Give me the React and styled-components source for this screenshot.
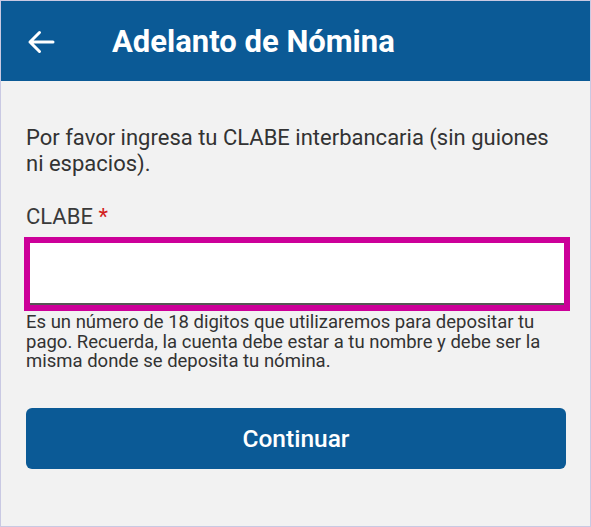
import React, { useState } from 'react';
import styled, { createGlobalStyle } from 'styled-components';

const GlobalStyle = createGlobalStyle`
  html, body {
    margin: 0;
    padding: 0;
    background: #f2f2f2;
  }
  * {
    box-sizing: border-box;
  }
`;

const Frame = styled.div`
  width: 591px;
  height: 527px;
  border: 1px solid #c9c9e3;
  background: #f2f2f2;
  font-family: Roboto, 'Noto Sans', sans-serif;
  overflow: hidden;
`;

const Header = styled.header`
  height: 80px;
  background: #0b5a96;
  display: flex;
  align-items: center;
  padding-left: 26px;
  color: #ffffff;
`;

const BackButton = styled.button`
  width: 28px;
  height: 28px;
  padding: 0;
  border: none;
  background: none;
  display: flex;
  align-items: center;
  justify-content: center;
  cursor: pointer;
  margin-top: 2px;
`;

const Title = styled.h1`
  margin: 0 0 0 57px;
  font-size: 31px;
  font-weight: 700;
  line-height: 1;
`;

const Content = styled.main`
  padding: 44px 25px 0 24px;
`;

const Intro = styled.p`
  margin: 0;
  font-size: 22px;
  line-height: 26px;
  color: #333333;
  padding-left: 1px;
`;

const Label = styled.label`
  display: block;
  margin-top: 27px;
  font-size: 22px;
  line-height: 26px;
  color: #3a3a3a;
  padding-left: 1px;
`;

const Required = styled.span`
  color: #d32020;
`;

const InputWrap = styled.div`
  margin: 7px 0 0 -1px;
  width: 546px;
  border: 6px solid #cc0099;
  background: #ffffff;
`;

const Input = styled.input`
  display: block;
  width: 100%;
  height: 62px;
  border: none;
  border-bottom: 2px solid #555555;
  background: #ffffff;
  outline: none;
  font-family: inherit;
  font-size: 20px;
  padding: 0 12px;
`;

const Helper = styled.p`
  margin: 2px 0 0;
  padding-left: 1px;
  font-size: 18.5px;
  line-height: 19.5px;
  color: #333333;
  max-width: 530px;
`;

const PrimaryButton = styled.button`
  display: block;
  margin: 36px 0 0 1px;
  width: 540px;
  height: 61px;
  border: none;
  border-radius: 6px;
  background: #0b5a96;
  color: #ffffff;
  font-family: inherit;
  font-size: 24.5px;
  font-weight: 500;
  cursor: pointer;
`;

const ArrowBack = () => (
  <svg width="28" height="24" viewBox="0 0 28 24" fill="none">
    <path
      d="M26 12H3M12.5 2.5L3 12l9.5 9.5"
      stroke="#ffffff"
      strokeWidth="3"
      strokeLinecap="round"
      strokeLinejoin="round"
    />
  </svg>
);

export default function App() {
  const [clabe, setClabe] = useState('');

  return (
    <>
      <GlobalStyle />
      <Frame>
        <Header>
          <BackButton aria-label="Regresar">
            <ArrowBack />
          </BackButton>
          <Title>Adelanto de Nómina</Title>
        </Header>
        <Content>
          <Intro>
            Por favor ingresa tu CLABE interbancaria (sin guiones ni espacios).
          </Intro>
          <Label htmlFor="clabe">
            CLABE <Required>*</Required>
          </Label>
          <InputWrap>
            <Input
              id="clabe"
              value={clabe}
              onChange={(e) => setClabe(e.target.value)}
            />
          </InputWrap>
          <Helper>
            Es un número de 18 digitos que utilizaremos para depositar tu pago.
            Recuerda, la cuenta debe estar a tu nombre y debe ser la misma donde
            se deposita tu nómina.
          </Helper>
          <PrimaryButton>Continuar</PrimaryButton>
        </Content>
      </Frame>
    </>
  );
}
